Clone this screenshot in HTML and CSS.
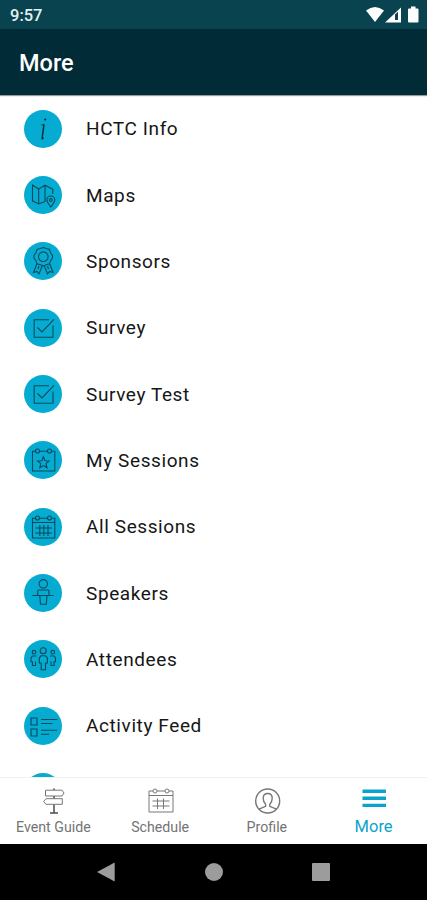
FILE: index.html
```html
<!DOCTYPE html>
<html lang="en">
<head>
  <meta charset="UTF-8" />
  <meta name="viewport" content="width=device-width, initial-scale=1" />
  <title>More</title>
  <link rel="stylesheet" href="styles.css">
</head>
<body>

  <div class="screen">
    <!-- Status Bar -->
    <div class="status-bar">
      <span class="time">9:57</span>
      <svg class="status-icons" width="54" height="18" viewBox="0 0 54 18">
        <path class="solid" d="M0 4.5Q9 -2.5 18 4.5L9 16Z" />
        <path class="solid" d="M19 16.5L35 1.5V16.5Z" />
        <path class="signal-gap" d="M29 14V8.5L32 5.8V14Z" />
        <path class="solid" d="M42 3.5Q42 2.5 43 2.5H45V0.5H49.5V2.5H51.5Q52.5 2.5 52.5 3.5V15.5Q52.5 16.5 51.5 16.5H43Q42 16.5 42 15.5Z" />
      </svg>
    </div>

    <!-- Header -->
    <header class="header">
      <h1>More</h1>
    </header>

    <!-- Menu -->
    <ul class="menu">
      <li>
        <svg class="icon" viewBox="0 0 38 38">
          <circle class="dot" cx="21.2" cy="9.6" r="1.1" />
          <path d="M17.3 15.2L20.2 14.2M17.6 29.5L20 27.8" />
          <path class="bold" d="M20 14.5L18 29" />
        </svg>
        <span>HCTC Info</span>
      </li>
      <li>
        <svg class="icon" viewBox="0 0 38 38">
          <path d="M21 25.5L14.7 28L8.5 24.8V9L14.7 13L21 9.2L28.8 13.3V18M14.7 13V28M21 9.2V25.5" />
          <path d="M26.8 31C24.5 27.8 22.8 26 22.8 24A4 4 0 0 1 30.8 24C30.8 26 29 27.8 26.8 31Z" />
          <circle cx="26.8" cy="24" r="1.4" />
        </svg>
        <span>Maps</span>
      </li>
      <li>
        <svg class="icon" viewBox="0 0 38 38">
          <path d="M19.3 5.5L22.2 6.6L25.5 7.5L26.5 10.8L28.5 13.5V16L26.5 18.7L25.5 21.8L22.2 22.8L19.3 24L16.4 22.8L13 21.8L12 18.7L10 16V13.5L12 10.8L13 7.5L16.4 6.6Z" />
          <circle cx="19.3" cy="14.7" r="4.8" />
          <path d="M12.8 22L9.5 30.5L13 29.5L15 32L18.3 23.8M25.8 22L29 30.5L25.5 29.5L23.5 32L20.3 23.8M14 27L15 24M24.5 27L23.5 24" />
        </svg>
        <span>Sponsors</span>
      </li>
      <li>
        <svg class="icon" viewBox="0 0 38 38">
          <path d="M25 10.8H10.2V28.2H29V16.5M13.5 18.5L18 23L30 10.3" />
        </svg>
        <span>Survey</span>
      </li>
      <li>
        <svg class="icon" viewBox="0 0 38 38">
          <path d="M25 10.8H10.2V28.2H29V16.5M13.5 18.5L18 23L30 10.3" />
        </svg>
        <span>Survey Test</span>
      </li>
      <li>
        <svg class="icon" viewBox="0 0 38 38">
          <path d="M11.5 10.2H8.5V30H30.8V10.2H27.5M15.5 10.2H23.5" />
          <circle cx="13.5" cy="10" r="2" /><circle cx="25.5" cy="10" r="2" />
          <path d="M19.4 15.8L21 19.7L25.2 20L22 22.7L23 26.8L19.4 24.6L15.8 26.8L16.8 22.7L13.6 20L17.8 19.7Z" />
        </svg>
        <span>My Sessions</span>
      </li>
      <li>
        <svg class="icon" viewBox="0 0 38 38">
          <path d="M11.5 10.2H8.5V30H30.8V10.2H27.5M15.5 10.2H23.5M8.5 14.5H30.8" />
          <circle cx="13.5" cy="10" r="2" /><circle cx="25.5" cy="10" r="2" />
          <path d="M11.5 20H28M11.5 25H28M15.8 17V28M19.8 17V28M24 17V28" />
        </svg>
        <span>All Sessions</span>
      </li>
      <li>
        <svg class="icon" viewBox="0 0 38 38">
          <circle cx="19.3" cy="9.8" r="4.2" />
          <path d="M8.3 21.5H29.5M13.7 21.5V17Q13.7 16 14.7 16H24Q25 16 25 17V21.5M15.8 21.5L16.5 30.3H22.3L23 21.5" />
        </svg>
        <span>Speakers</span>
      </li>
      <li>
        <svg class="icon" viewBox="0 0 38 38">
          <circle cx="19.2" cy="10.8" r="3" />
          <path d="M17 15.8H21.5L23.4 18V23H21.5V29.8H17.2V23H15.3V18Z" />
          <circle cx="10" cy="12.2" r="1.8" /><circle cx="28.8" cy="12.2" r="1.8" />
          <path d="M12.5 16H8.5L7 18V21.5L8.5 22V25.5H11.5V21.5M26 16H30L31.5 18V21.5L30 22V25.5H27V21.5" />
        </svg>
        <span>Attendees</span>
      </li>
      <li>
        <svg class="icon" viewBox="0 0 38 38">
          <path d="M7 11H13V18H7ZM7 22H13V29H7ZM17 12.5H33.5M17 16.5H28.5M17 23.3H33M17 27.2H25" />
        </svg>
        <span>Activity Feed</span>
      </li>
      <li>
        <svg class="icon" viewBox="0 0 38 38"></svg>
      </li>
    </ul>

    <!-- Bottom Tabs -->
    <nav class="tabs">
      <a class="tab">
        <svg class="tab-icon" viewBox="0 0 28 28">
          <path class="dark" d="M15 1.5V3M15 9V11.5M15 17.5V26M11 26H19" />
          <path d="M6.5 3.2H23L25 6L23 9H6.5ZM23.3 11.7H7L4.6 14.5L7 17.3H23.3Z" />
        </svg>
        <span>Event Guide</span>
      </a>
      <a class="tab">
        <svg class="tab-icon" viewBox="0 0 28 28">
          <path d="M7 4H3V25H27V4H23M11 4H19M3 8.5H27M6.5 14H23.5M6.5 19H23.5M11.5 11.5V22M17.5 11.5V22" />
          <circle cx="9" cy="4" r="2" /><circle cx="21" cy="4" r="2" />
        </svg>
        <span>Schedule</span>
      </a>
      <a class="tab">
        <svg class="tab-icon profile" viewBox="0 0 28 28">
          <circle cx="14.7" cy="14" r="12" />
          <path d="M6 22.2L12.6 19.3V17.2C10.7 15.5 10.2 13.2 10.2 11.3C10.2 8.2 11.8 6.5 14.7 6.5C17.6 6.5 19.2 8.2 19.2 11.3C19.2 13.2 18.7 15.5 16.8 17.2V19.3L23.4 22.2" />
        </svg>
        <span>Profile</span>
      </a>
      <a class="tab active">
        <svg class="tab-icon" viewBox="0 0 28 28">
          <path d="M2.5 4.2H26M2.5 11.3H26M2.5 18.4H26" />
        </svg>
        <span>More</span>
      </a>
    </nav>

    <!-- System Navigation -->
    <div class="system-nav">
      <svg viewBox="0 0 20 20"><path d="M0 10L17.7 0.5V19.5Z" /></svg>
      <svg viewBox="0 0 20 20"><circle cx="10" cy="10" r="9" /></svg>
      <svg viewBox="0 0 20 20"><rect x="1" y="1" width="18" height="18" rx="1" /></svg>
    </div>
  </div>

</body>
</html>
```
FILE: styles.css
```css
/* === Body === */
body {
  margin: 0;
  background: #ffffff;
  font-family: Roboto, Arial, sans-serif;
}

.screen {
  display: flex;
  flex-direction: column;
  height: 900px;
  overflow: hidden;
}

/* === Status Bar === */
.status-bar {
  display: flex;
  flex: none;
  justify-content: space-between;
  align-items: center;
  box-sizing: border-box;
  height: 29px;
  padding: 1px 7px 0 10px;
  background: #08434f;
}

.time {
  color: #e6eff1;
  font-size: 16.5px;
  font-weight: 500;
}

.solid {
  fill: #ffffff;
}

.signal-gap {
  fill: #08434f;
}

/* === Header === */
.header {
  display: flex;
  flex: none;
  align-items: center;
  box-sizing: border-box;
  height: 66px;
  padding: 2px 19px 0;
  background: #012b37;
  box-shadow: 0 1px 1px rgba(0, 0, 0, 0.4);
}

h1 {
  margin: 0;
  color: #ffffff;
  font-size: 23.5px;
  font-weight: 500;
}

/* === Menu === */
.menu {
  flex: 1;
  min-height: 0;
  margin: 0;
  padding: 0.5px 24px 0;
  overflow: hidden;
  list-style: none;
}

.menu li {
  display: flex;
  align-items: center;
  gap: 24px;
  height: 66.35px;
  color: #161616;
  font-size: 19px;
  letter-spacing: 0.6px;
}

.icon {
  width: 38px;
  height: 38px;
  border-radius: 50%;
  background: #05abd0;
  fill: none;
  stroke: #07495d;
  stroke-width: 1.1;
}

.icon .dot {
  fill: #052c38;
  stroke: none;
}

.icon .bold {
  stroke: #052c38;
  stroke-width: 1.5;
}

/* === Bottom Tabs === */
.tabs {
  display: flex;
  flex: none;
  box-sizing: border-box;
  height: 67px;
  border-top: 1px solid #f1f1f1;
  background: #ffffff;
}

.tab {
  display: flex;
  flex: 1;
  flex-direction: column;
  align-items: center;
  padding-top: 9px;
  color: #747474;
  font-size: 14.2px;
}

.tab-icon {
  width: 28px;
  height: 28px;
  margin-bottom: 4px;
  fill: none;
  stroke: #777777;
  stroke-width: 1;
}

.tab-icon .dark {
  stroke: #4c4c4c;
  stroke-width: 1.5;
}

.profile {
  stroke-width: 1.4;
}

.active {
  color: #0ba3cb;
  font-size: 16.5px;
}

.active .tab-icon {
  margin-bottom: 2px;
  stroke: #0ba3cb;
  stroke-width: 3.4;
}

/* === System Navigation === */
.system-nav {
  display: flex;
  flex: none;
  justify-content: center;
  align-items: center;
  gap: 87px;
  height: 56px;
  background: #000000;
}

.system-nav svg {
  width: 20px;
  height: 20px;
  fill: #9c9c9c;
}
```
